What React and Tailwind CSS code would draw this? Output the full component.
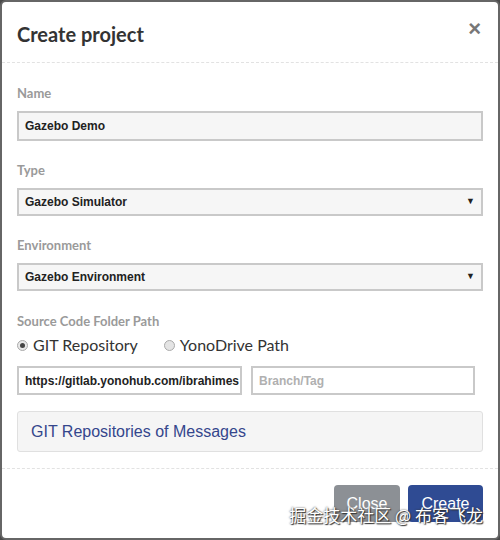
export default function App() {
  return (
    <div className="w-[500px] h-[540px] bg-[#4a4a4a] font-['Liberation_Sans',Arial,sans-serif]">
      <div className="relative w-[500px] h-[540px] bg-white rounded-[6px] border-2 border-[#666] flex flex-col overflow-hidden">
        {/* Header */}
        <div className="h-[61px] px-[15px] flex items-center justify-between border-b border-dashed border-[#e2e2e2] shrink-0">
          <h2 className="font-['Lato',sans-serif] text-[20px] font-bold text-[#333] pt-[3px]">Create project</h2>
          <span className="text-[22px] font-bold text-[#777] leading-none -mt-[6px] mr-[2px]">×</span>
        </div>

        {/* Body */}
        <div className="px-[15px] pt-[21px] pb-[16px] border-b border-dashed border-[#e2e2e2]">
          <label className="block font-['Lato',sans-serif] text-[13px] font-bold text-[#9a9a9a] leading-[18px] mb-[9px]">Name</label>
          <div className="h-[30px] border-2 border-[#c9c9c9] bg-[#f6f6f6] flex items-center pl-[6px] text-[12px] font-bold text-[#222]">
            Gazebo Demo
          </div>

          <label className="block font-['Lato',sans-serif] text-[13px] font-bold text-[#9a9a9a] leading-[18px] mt-[20px] mb-[9px]">Type</label>
          <div className="h-[28px] border-2 border-[#c9c9c9] bg-[#f6f6f6] flex items-center justify-between px-[6px] text-[12px] font-bold text-[#222]">
            <span>Gazebo Simulator</span>
            <span className="text-[9px] text-[#222]">▼</span>
          </div>

          <label className="block font-['Lato',sans-serif] text-[13px] font-bold text-[#9a9a9a] leading-[18px] mt-[20px] mb-[9px]">Environment</label>
          <div className="h-[28px] border-2 border-[#c9c9c9] bg-[#f6f6f6] flex items-center justify-between px-[6px] text-[12px] font-bold text-[#222]">
            <span>Gazebo Environment</span>
            <span className="text-[9px] text-[#222]">▼</span>
          </div>

          <label className="block font-['Lato',sans-serif] text-[13px] font-bold text-[#9a9a9a] leading-[18px] mt-[21px]">Source Code Folder Path</label>
          <div className="flex items-center h-[24px] mt-[3px] font-['Lato',sans-serif] text-[16px] text-[#333]">
            <span className="w-[11px] h-[11px] rounded-full border border-[#aaa] bg-[#e8e8e8] flex items-center justify-center mr-[5px]">
              <span className="w-[5px] h-[5px] rounded-full bg-[#444]" />
            </span>
            <span>GIT Repository</span>
            <span className="w-[11px] h-[11px] rounded-full border border-[#aaa] bg-[#e4e4e4] ml-[26px] mr-[5px]" />
            <span>YonoDrive Path</span>
          </div>

          <div className="flex gap-[9px] mt-[9px] pr-[8px]">
            <div className="w-[225px] h-[29px] border-2 border-[#c9c9c9] bg-white flex items-center pl-[6px] text-[12px] font-bold text-[#222] overflow-hidden whitespace-nowrap">
              https://gitlab.yonohub.com/ibrahimes
            </div>
            <div className="flex-1 h-[29px] border-2 border-[#c9c9c9] bg-white flex items-center pl-[6px] text-[12px] font-bold text-[#b0b0b0]">
              Branch/Tag
            </div>
          </div>

          <div className="mt-[16px] h-[41px] bg-[#f5f5f5] border border-[#e0e0e0] rounded-[3px] flex items-center pl-[13px] text-[16px] text-[#34468c]">
            GIT Repositories of Messages
          </div>
        </div>

        {/* Footer */}
        <div className="flex justify-end gap-[8px] px-[15px] pt-[16px]">
          <button className="w-[66px] h-[37px] rounded-[4px] bg-[#8c9095] text-white text-[16px]">Close</button>
          <button className="w-[75px] h-[37px] rounded-[4px] bg-[#2f4b93] text-white text-[16px]">Create</button>
        </div>

        {/* Watermark */}
        <div className="absolute right-[15px] bottom-[15px] font-['Noto_Sans_CJK_SC',sans-serif] text-[17px] text-white leading-none [text-shadow:0_0_2px_#333,1px_1px_1px_#333]">
          掘金技术社区 @ 布客飞龙
        </div>
      </div>
    </div>
  )
}
